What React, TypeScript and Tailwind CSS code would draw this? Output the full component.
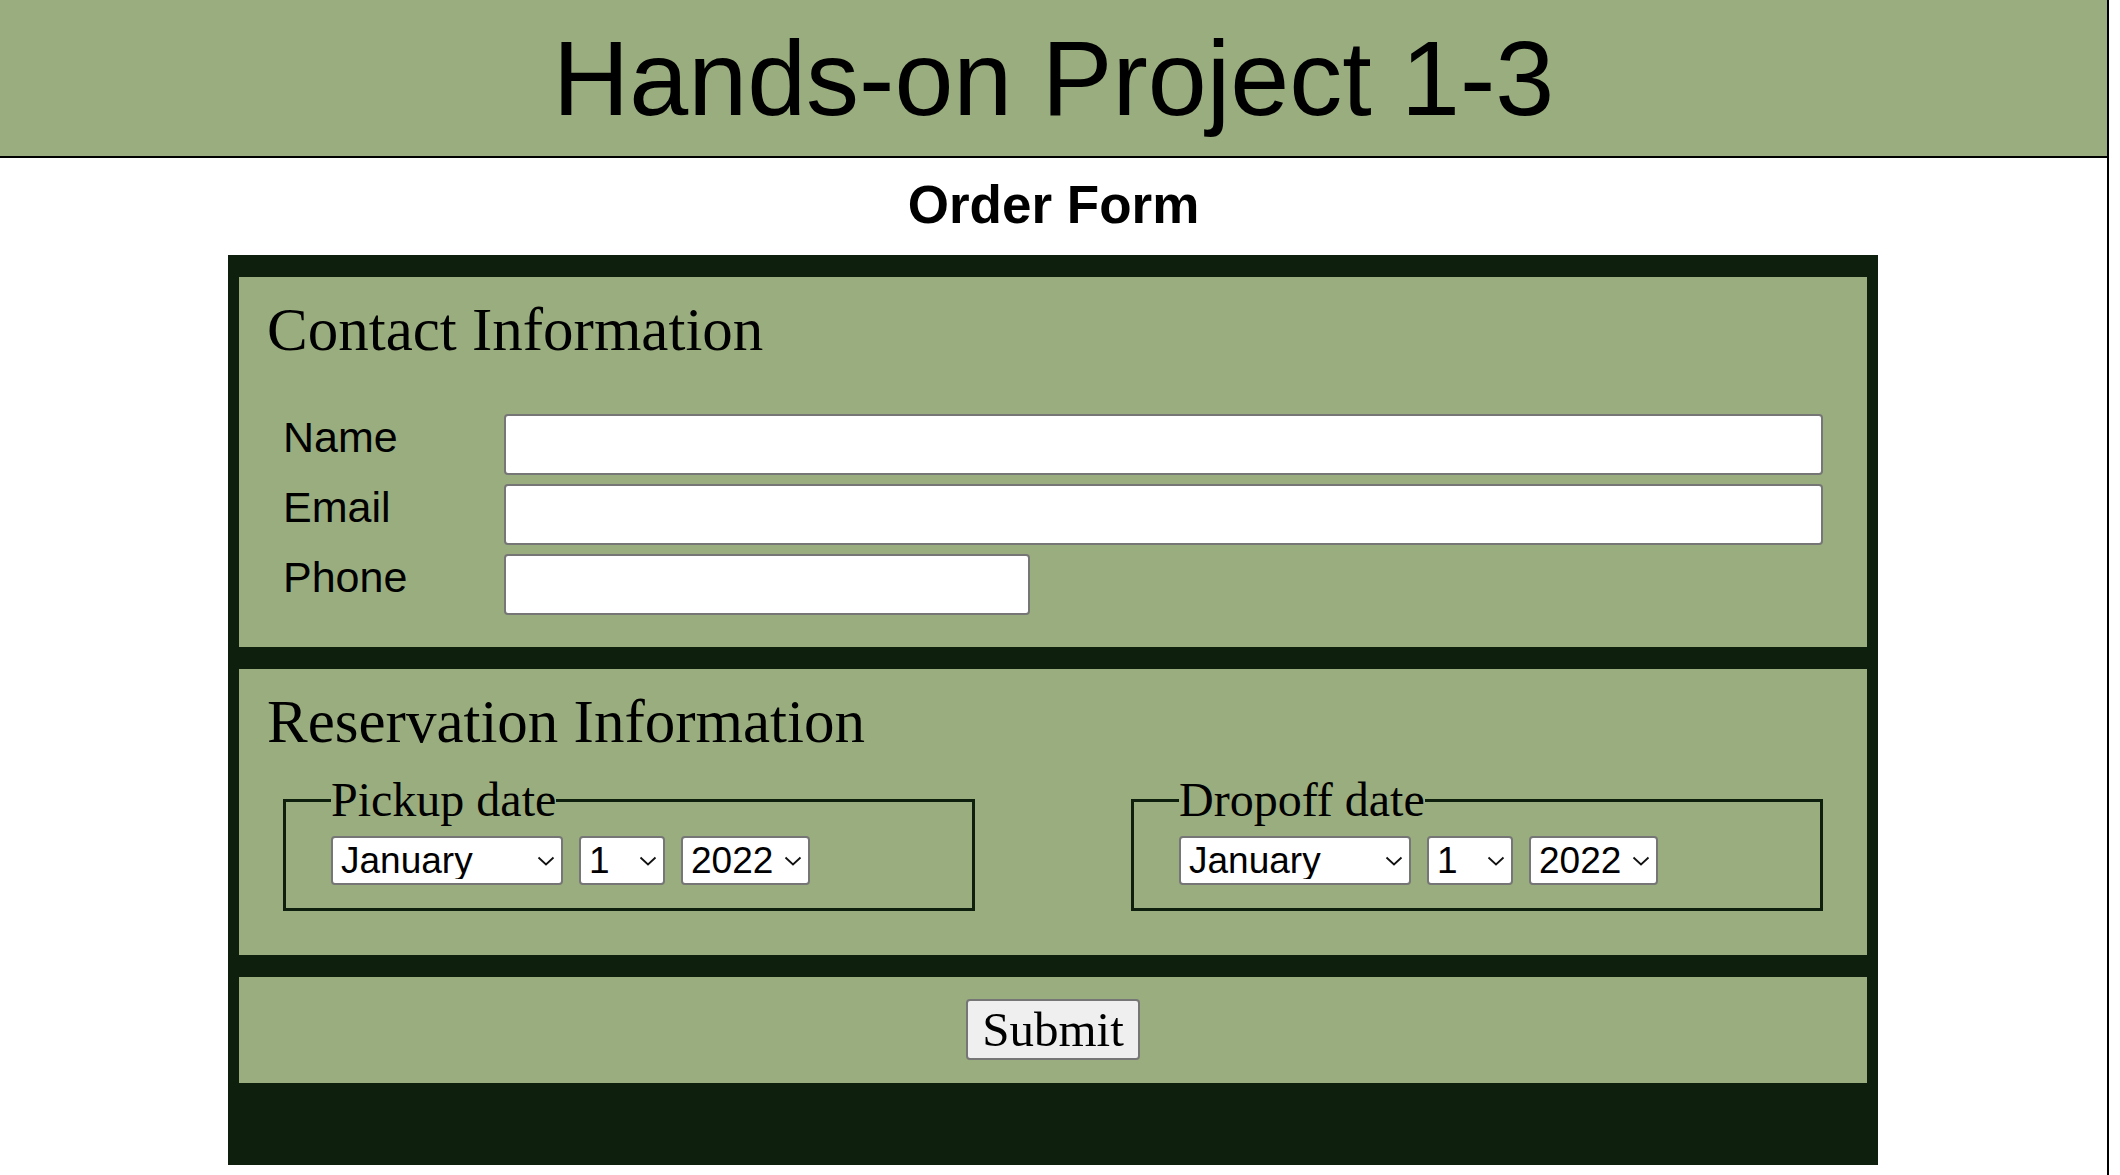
import { useState } from "react";

const MONTHS = [
  "January",
  "February",
  "March",
  "April",
  "May",
  "June",
  "July",
  "August",
  "September",
  "October",
  "November",
  "December",
];
const DAYS = Array.from({ length: 31 }, (_, i) => String(i + 1));
const YEARS = ["2022", "2023", "2024", "2025"];

const sans = "font-['Liberation_Sans',Arial,sans-serif]";
const serif = "font-['Liberation_Serif','Times_New_Roman',serif]";

function Chevron() {
  return (
    <svg
      width="18"
      height="10"
      viewBox="0 0 18 10"
      fill="none"
      stroke="#111"
      strokeWidth="1.8"
      className="pointer-events-none absolute right-[8px] top-1/2 -translate-y-1/2"
    >
      <polyline points="1.5,1.5 9,8.5 16.5,1.5" />
    </svg>
  );
}

function Dropdown({ options, width }: { options: string[]; width: string }) {
  const [value, setValue] = useState(options[0]);
  return (
    <div className={`relative ${width}`}>
      <select
        value={value}
        onChange={(e) => setValue(e.target.value)}
        className={`${sans} w-full h-[49px] appearance-none bg-white border-2 border-[#767676] rounded-[4px] pl-[8px] pr-[28px] text-[37px] leading-none text-black outline-none`}
      >
        {options.map((o) => (
          <option key={o} value={o}>
            {o}
          </option>
        ))}
      </select>
      <Chevron />
    </div>
  );
}

function DateFieldset({ legend }: { legend: string }) {
  return (
    <fieldset className="w-[692px] border-[3px] border-[#0f1f0d] pl-[45px] pt-[9px] pb-[23px]">
      <legend className={`${serif} text-[48px] leading-[54px] text-black`}>{legend}</legend>
      <div className="flex gap-[16px]">
        <Dropdown options={MONTHS} width="w-[232px]" />
        <Dropdown options={DAYS} width="w-[86px]" />
        <Dropdown options={YEARS} width="w-[129px]" />
      </div>
    </fieldset>
  );
}

function SectionHeading({ children }: { children: string }) {
  return <h2 className={`${serif} text-[61px] leading-[69px] font-normal text-black`}>{children}</h2>;
}

const inputClass = "h-[61px] bg-white border-2 border-[#767676] rounded-[4px] px-2 text-[37px] outline-none";

export default function App() {
  return (
    <div className="w-[2109px] min-h-screen bg-white border-r-2 border-black">
      <header className="h-[158px] bg-[#9aad7f] border-b-2 border-black flex items-center justify-center">
        <h1 className={`${sans} text-[106px] leading-none font-normal text-black`}>Hands-on Project 1-3</h1>
      </header>

      <h2 className={`${sans} mt-[17px] mb-[20px] text-center text-[53px] leading-[60px] font-bold text-black`}>
        Order Form
      </h2>

      <form
        onSubmit={(e) => e.preventDefault()}
        className="w-[1650px] ml-[228px] bg-[#0f1f0d] pt-[22px] px-[11px] pb-[82px] flex flex-col gap-[22px]"
      >
        {/* Contact details */}
        <section className="bg-[#9aad7f] pl-[28px] pr-[44px] pt-[18px] pb-[32px]">
          <SectionHeading>Contact Information</SectionHeading>
          <div className={`${sans} ml-[16px] mt-[50px] grid grid-cols-[221px_1fr] gap-y-[9px] text-[43px] leading-[46px] text-black`}>
            <label htmlFor="name">Name</label>
            <input id="name" type="text" className={`${inputClass} w-full`} />
            <label htmlFor="email">Email</label>
            <input id="email" type="email" className={`${inputClass} w-full`} />
            <label htmlFor="phone">Phone</label>
            <input id="phone" type="tel" className={`${inputClass} w-[526px]`} />
          </div>
        </section>

        {/* Pickup / dropoff dates */}
        <section className="bg-[#9aad7f] pl-[28px] pr-[44px] pt-[18px] pb-[44px]">
          <SectionHeading>Reservation Information</SectionHeading>
          <div className="ml-[16px] mt-[17px] flex justify-between">
            <DateFieldset legend="Pickup date" />
            <DateFieldset legend="Dropoff date" />
          </div>
        </section>

        <section className="bg-[#9aad7f] pt-[22px] pb-[23px] flex justify-center">
          <button
            type="submit"
            className={`${serif} w-[174px] h-[61px] bg-[#efefef] border-2 border-[#767676] rounded-[4px] text-[49px] leading-none text-black flex items-center justify-center`}
          >
            Submit
          </button>
        </section>
      </form>
    </div>
  );
}
